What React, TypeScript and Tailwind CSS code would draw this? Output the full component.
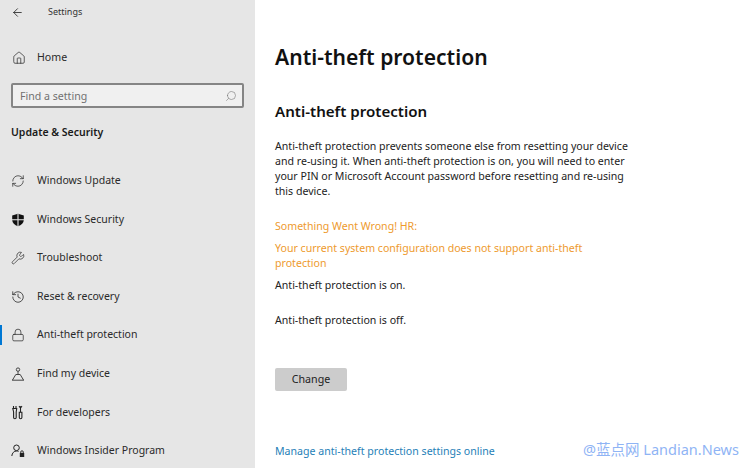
import { ArrowLeft, Home, Search, RefreshCw, Wrench, History, Lock } from 'lucide-react';
import type { ReactNode } from 'react';

const FONT = { fontFamily: '"Noto Sans", "Open Sans", sans-serif' };

function ShieldIcon() {
  return (
    <svg width="14" height="14" viewBox="0 0 14 14" fill="#111">
      <path d="M7 .8 1.200 2.400V7c0 3 2.400 5 5.800 6.200C10.400 12 12.800 10 12.800 7V2.400Z" />
      <path d="M7 1v12.500M1 6.800h12" stroke="#e6e6e6" strokeWidth="1.100" />
    </svg>
  );
}

function FindIcon() {
  return (
    <svg width="14" height="14" viewBox="0 0 14 14" fill="none" stroke="#333" strokeWidth=".9">
      <circle cx="7" cy="2.600" r="1.700" />
      <path d="M7 4.300v3.200M4.800 7.500h4.400M4.800 7.500 1.500 13M9.200 7.500l3.300 5.500M1 13.200h12" />
    </svg>
  );
}

function DevIcon() {
  return (
    <svg width="14" height="15" viewBox="0 0 14 15" fill="none" stroke="#222" strokeWidth="1.100">
      <path d="M2.500 1v2.500M5 1v2.500M1.800 3.500h3.900L5.200 7v5.500c0 1.600-2.600 1.600-2.600 0V7ZM9.500 1.200v6" />
      <path d="M8 1.200 9.500 3 11 1.200M8.300 7.200h2.600V12.500c0 1.600-2.600 1.600-2.600 0Z" />
    </svg>
  );
}

function InsiderIcon() {
  return (
    <svg width="14" height="14" viewBox="0 0 14 14" fill="none" stroke="#222" strokeWidth="1">
      <circle cx="5.500" cy="3.800" r="2.800" />
      <path d="M.8 12c.3-3 2.200-5 4.700-5 .8 0 1.500.2 2 .5" />
      <rect x="8.800" y="9" width="4.400" height="4" fill="#222" stroke="none" />
      <path d="M9.800 9V7.800c0-1.400 2.400-1.400 2.400 0V9" />
    </svg>
  );
}

function NavRow({ icon, label, active }: { icon: ReactNode; label: string; active?: boolean }) {
  return (
    <div className="relative flex h-[38.570px] shrink-0 items-center pl-[11px]">
      {active && <div className="absolute left-0 top-[9px] h-[20px] w-[2px] bg-[#0078d4]" />}
      <div className="flex w-[26px] items-center">{icon}</div>
      <span className="text-[10.500px] text-[#2a2a2a]">{label}</span>
    </div>
  );
}

export default function App() {
  const iconCls = 'h-[14px] w-[14px] text-[#222]';
  return (
    <div className="relative flex h-[468px] w-[751px] overflow-hidden bg-white" style={FONT}>
      {/* Sidebar */}
      <aside className="flex h-full w-[255px] shrink-0 flex-col bg-[#e6e6e6]">
        <div className="flex h-[24px] shrink-0 items-center pl-[11px]">
          <ArrowLeft className="h-[13px] w-[13px] text-[#222]" strokeWidth={1.500} />
          <span className="ml-[24px] text-[9px] text-[#333]">Settings</span>
        </div>
        <div className="mt-[22px] flex h-[24px] shrink-0 items-center pl-[12px]">
          <Home className={iconCls} strokeWidth={1.200} />
          <span className="ml-[11px] text-[10.600px] text-[#2a2a2a]">Home</span>
        </div>
        <div className="mx-[11px] mt-[13px] flex h-[25px] shrink-0 items-center justify-between rounded-[2px] border-2 border-[#858585] bg-[#f0f0f0] pl-[7px] pr-[5px]">
          <span className="text-[10.600px] leading-[18px] text-[#707070]">Find a setting</span>
          <Search className="h-[12px] w-[12px] -scale-x-100 text-[#777]" strokeWidth={1.200} />
        </div>
        <div className="ml-[11px] mt-[17px] shrink-0 text-[10.500px] font-semibold text-[#1a1a1a]">Update &amp; Security</div>
        <div className="mt-[21px] flex shrink-0 flex-col">
          <NavRow icon={<RefreshCw className={iconCls} strokeWidth={1.200} />} label="Windows Update" />
          <NavRow icon={<ShieldIcon />} label="Windows Security" />
          <NavRow icon={<Wrench className={iconCls} strokeWidth={1.200} />} label="Troubleshoot" />
          <NavRow icon={<History className={iconCls} strokeWidth={1.300} />} label="Reset & recovery" />
          <NavRow icon={<Lock className={iconCls} strokeWidth={1.200} />} label="Anti-theft protection" active />
          <NavRow icon={<FindIcon />} label="Find my device" />
          <NavRow icon={<DevIcon />} label="For developers" />
          <NavRow icon={<InsiderIcon />} label="Windows Insider Program" />
        </div>
      </aside>

      {/* Main */}
      <main className="flex flex-1 flex-col pl-[20px] text-[#222]">
        <h1 className="mt-[41px] text-[21.100px] font-semibold leading-[32px] text-[#111]">Anti-theft protection</h1>
        <h2 className="mt-[26px] text-[15.100px] font-semibold leading-[24px] text-[#111]">Anti-theft protection</h2>
        <p className="mt-[15.500px] w-[358px] text-[10.600px] leading-[15px]">
          Anti-theft protection prevents someone else from resetting your device and re-using it. When anti-theft
          protection is on, you will need to enter your PIN or Microsoft Account password before resetting and
          re-using this device.
        </p>
        <p className="mt-[19px] text-[10.600px] leading-[16px] text-[#ee9a2e]">Something Went Wrong! HR:</p>
        <p className="mt-[7px] w-[320px] text-[10.600px] leading-[15px] text-[#ee9a2e]">
          Your current system configuration does not support anti-theft protection
        </p>
        <p className="mt-[6px] text-[10.600px] leading-[16px]">Anti-theft protection is on.</p>
        <p className="mt-[19px] text-[10.600px] leading-[16px]">Anti-theft protection is off.</p>
        <button className="mt-[40px] flex h-[23px] w-[72px] items-center justify-center rounded-[2px] bg-[#cccccc] text-[10.700px] text-[#222]">
          Change
        </button>
        <a className="mt-[52px] text-[10.600px] leading-[16px] text-[#1f7fb8]">Manage anti-theft protection settings online</a>
      </main>

      {/* Watermark */}
      <div
        className="absolute left-[583px] top-[439px] text-[14.500px] leading-[20px] text-[#8fb4f5]"
        style={{ fontFamily: '"Noto Sans", "Noto Sans CJK SC", sans-serif' }}
      >
        @蓝点网 Landian.News
      </div>
    </div>
  );
}
